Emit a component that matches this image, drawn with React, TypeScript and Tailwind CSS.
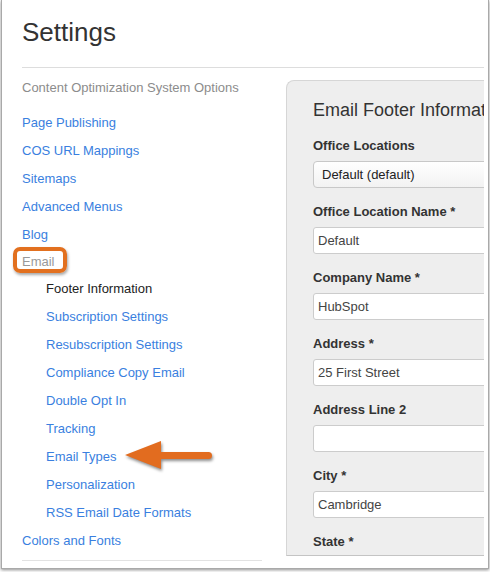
import React from "react";

const links1 = ["Page Publishing", "COS URL Mappings", "Sitemaps", "Advanced Menus", "Blog"];
const sub = [
  "Subscription Settings",
  "Resubscription Settings",
  "Compliance Copy Email",
  "Double Opt In",
  "Tracking",
  "Email Types",
  "Personalization",
  "RSS Email Date Formats",
];

const fields: { label: string; value: string; select?: boolean }[] = [
  { label: "Office Locations", value: "Default (default)", select: true },
  { label: "Office Location Name *", value: "Default" },
  { label: "Company Name *", value: "HubSpot" },
  { label: "Address *", value: "25 First Street" },
  { label: "Address Line 2", value: "" },
  { label: "City *", value: "Cambridge" },
  { label: "State *", value: "" },
];

export default function App() {
  return (
    <div className="relative w-[490px] h-[572px] bg-white overflow-hidden font-['Liberation_Sans',Arial,sans-serif]">
      <div className="ml-[1px] w-[488px] h-[569px] border-l border-r border-b border-[#a9a9a9] bg-white shadow-[0_1px_3px_rgba(0,0,0,0.45)] overflow-hidden pl-[20px] pr-[4px]">
        <div className="h-[68px] border-b border-[#dddddd] pt-[17px]">
          <h1 className="text-[26px] leading-[30px] text-[#333333] font-normal">Settings</h1>
        </div>
        <div className="flex">
          <div className="w-[240px] shrink-0 pt-[6px]">
            <div className="text-[13px] leading-[28px] text-[#8c8c8c] mb-[7px] whitespace-nowrap">
              Content Optimization System Options
            </div>
            {links1.map((l) => (
              <div key={l} className="text-[13px] leading-[28px] text-[#3a7fe0]">
                {l}
              </div>
            ))}
            <div className="relative h-[26px] text-[13px] leading-[26px] text-[#999999]">
              <span>Email</span>
              <span className="absolute left-[-9px] top-[-2px] w-[54px] h-[26px] border-[4px] border-[#e2701f] rounded-[7px] shadow-[1px_2px_3px_rgba(0,0,0,0.35)]" />
            </div>
            <div className="pl-[24px] text-[13px] leading-[28px] text-[#222222]">Footer Information</div>
            {sub.map((l) => (
              <div key={l} className="pl-[24px] text-[13px] leading-[28px] text-[#3a7fe0] whitespace-nowrap">
                {l}
              </div>
            ))}
            <div className="text-[13px] leading-[28px] text-[#3a7fe0]">Colors and Fonts</div>
            <div className="mt-[5px] border-t border-[#e2e2e2]" />
          </div>
          <div className="ml-[24px] mt-[12px] flex-1 min-w-0 h-[476px] overflow-hidden bg-[#eeeeee] border-l border-t border-b border-[#d6d6d6] border-b-[#c4c4c4] rounded-tl-[8px] pl-[26px] pt-[17px]">
            <div className="text-[18px] leading-[24px] text-[#333333] whitespace-nowrap mb-[14px]">
              Email Footer Information
            </div>
            {fields.map((f) => (
              <div key={f.label} className="mb-[14px]">
                <div className="text-[13px] leading-[20px] font-bold text-[#333333] mb-[5px] whitespace-nowrap">
                  {f.label}
                </div>
                {f.select ? (
                  <div className="w-[240px] h-[27px] border border-[#c8c8c8] rounded-[4px] bg-gradient-to-b from-white to-[#f2f2f2] pl-[8px] text-[13px] leading-[25px] text-[#222222] whitespace-nowrap">
                    {f.value}
                  </div>
                ) : (
                  <div className="w-[240px] h-[27px] border border-[#cccccc] rounded-[3px] bg-white pl-[4px] text-[13px] leading-[25px] text-[#444444] whitespace-nowrap">
                    {f.value}
                  </div>
                )}
              </div>
            ))}
          </div>
        </div>
      </div>
      <svg
        className="absolute left-[120px] top-[436px] drop-shadow-[1px_2px_1.5px_rgba(0,0,0,0.45)]"
        width="96"
        height="40"
        viewBox="0 0 96 40"
      >
        <path
          d="M5 19 L41 5 L41 16 L88.5 16 A3.5 3.5 0 0 1 88.5 23 L41 23 L41 33 Z"
          fill="#e26c1f"
        />
      </svg>
    </div>
  );
}
